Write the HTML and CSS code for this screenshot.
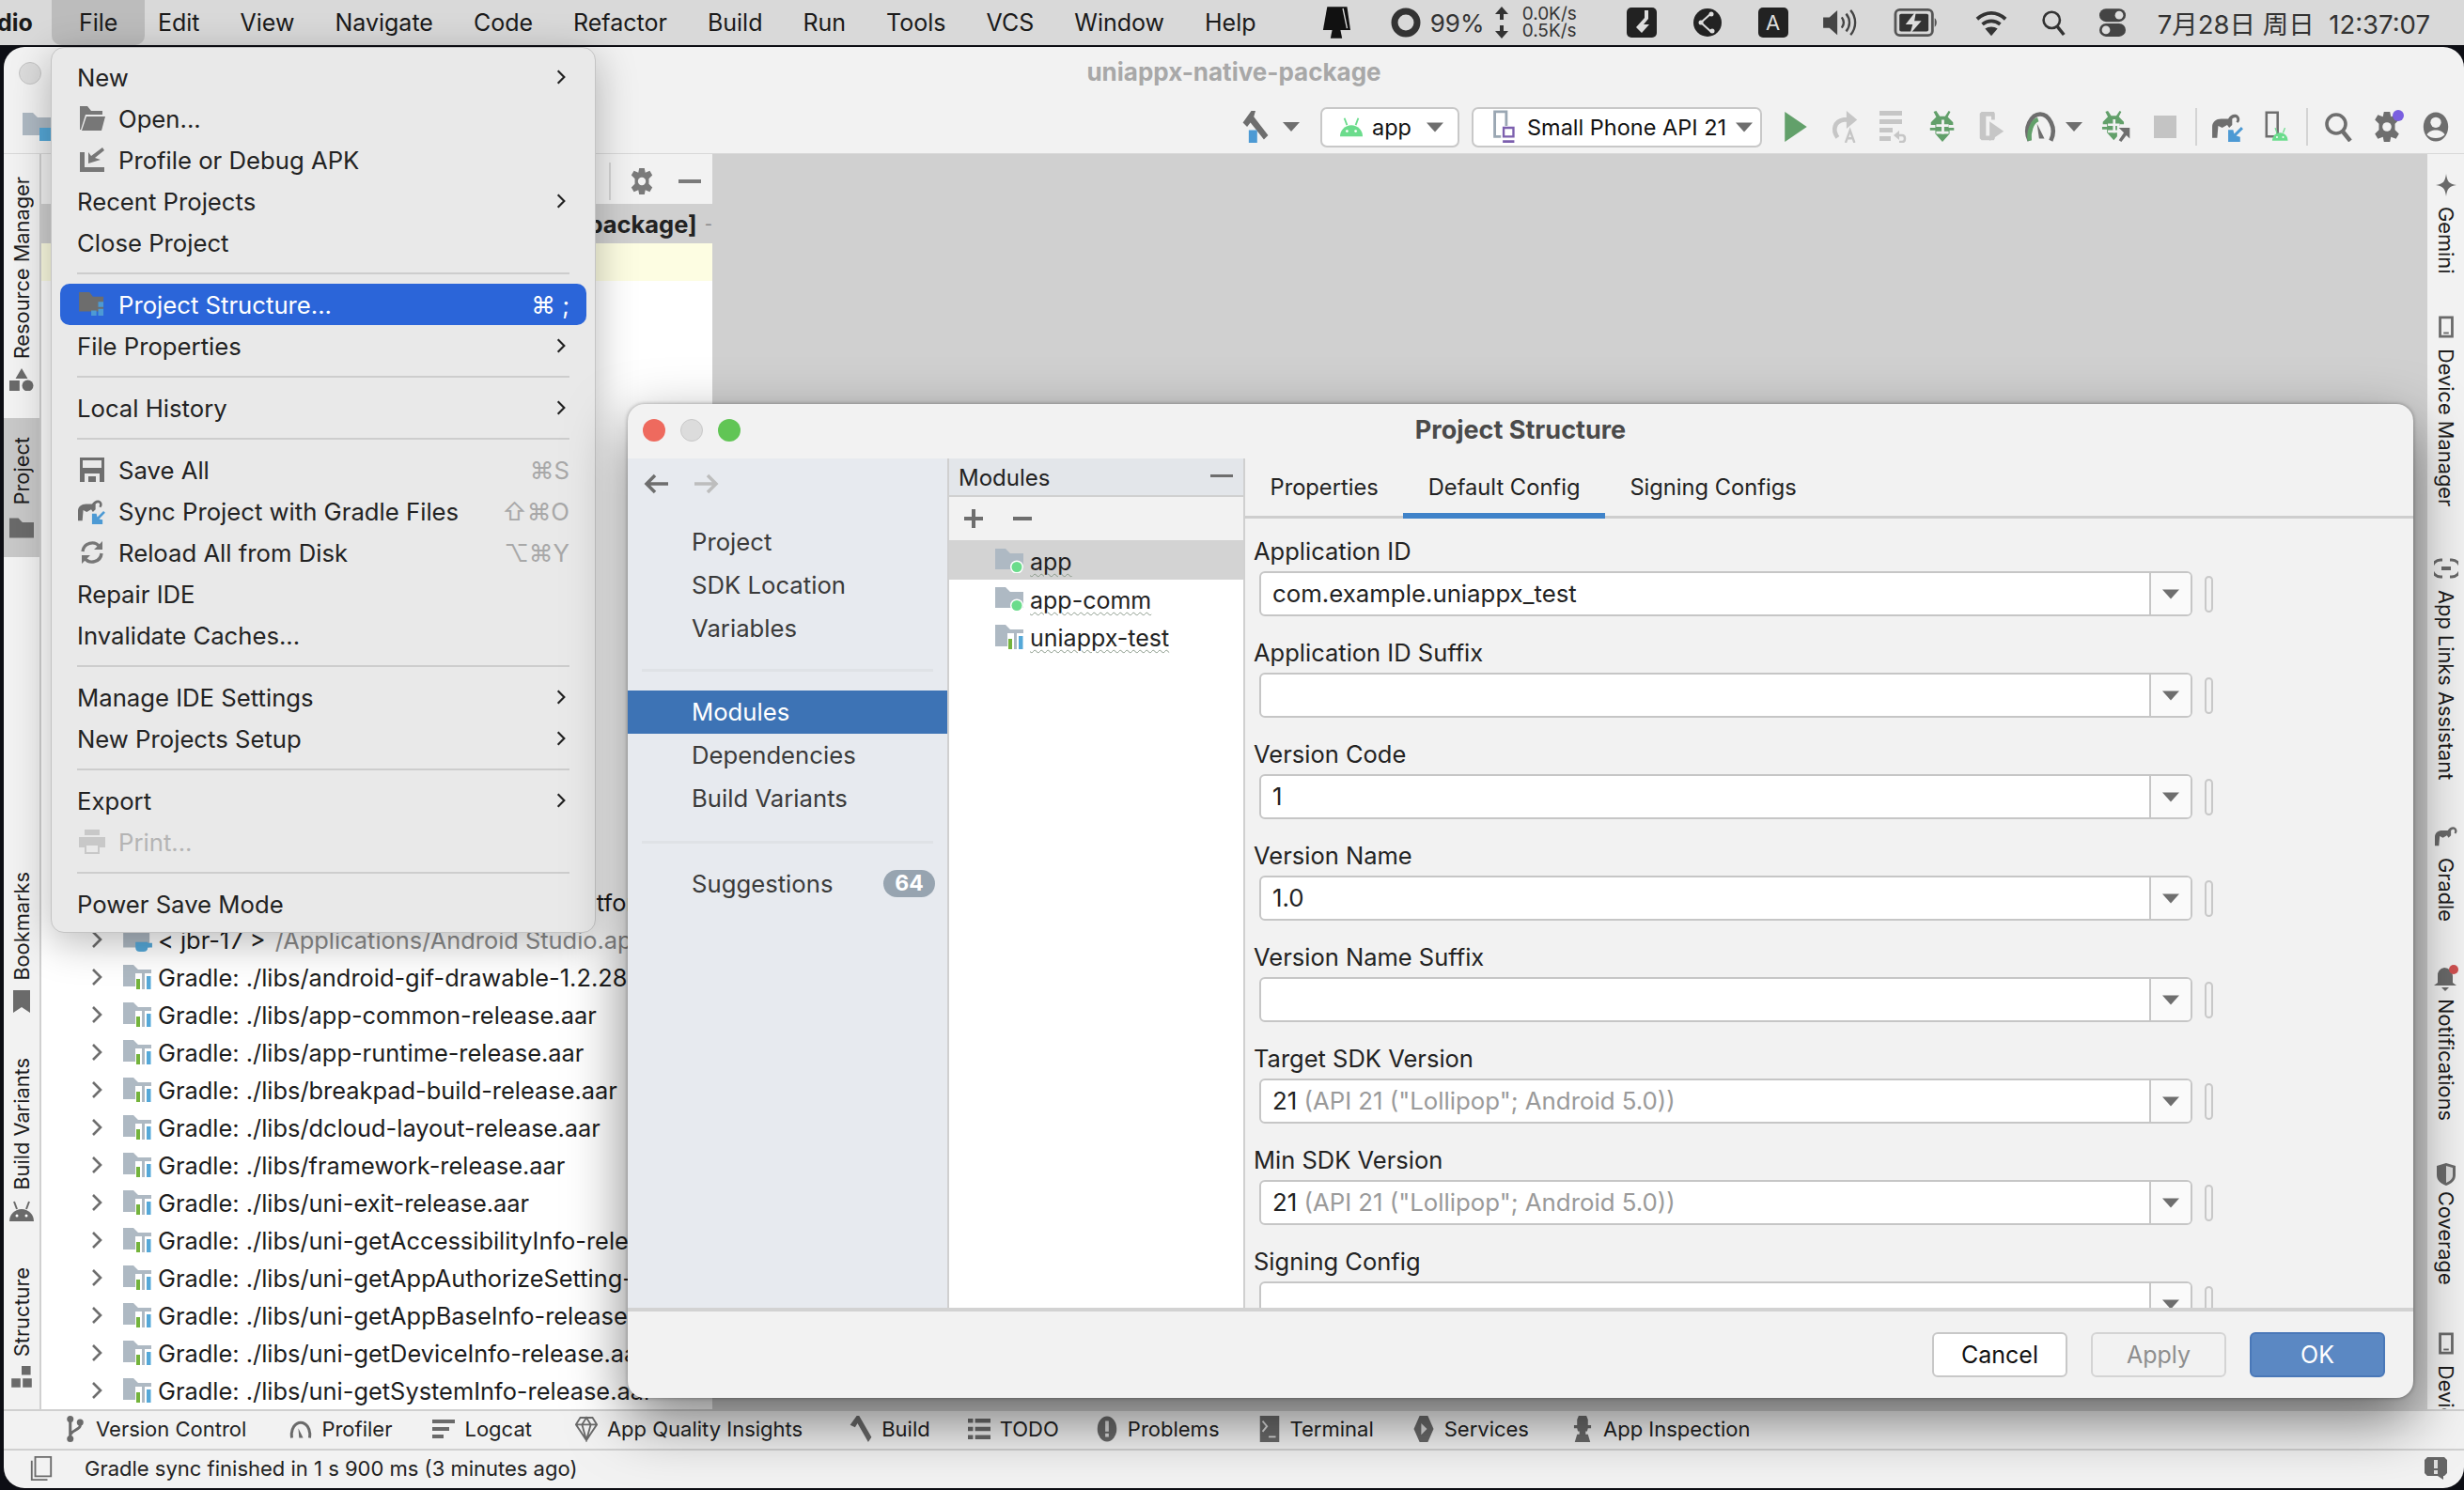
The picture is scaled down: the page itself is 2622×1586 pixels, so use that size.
FILE: index.html
```html
<!DOCTYPE html>
<html lang="en">
<head>
<meta charset="utf-8">
<title>Project Structure</title>
<link rel="stylesheet" href="styles.css">
</head>
<body>
<svg class="defs" xmlns="http://www.w3.org/2000/svg">
  <symbol id="folder" viewBox="0 0 30 24"><path d="M0 0h11l5 5h14v19H0z"/></symbol>
  <symbol id="mod" viewBox="0 0 30 26"><path fill="#aeb9c3" d="M0 0h11l5 5h14v17H0z"/><circle cx="23" cy="19.5" r="7" fill="#fff"/><circle cx="23" cy="19.5" r="5.5" fill="#6bdc8c"/></symbol>
  <symbol id="lib" viewBox="0 0 30 26"><path fill="#aeb9c3" d="M0 0h11l5 5h14v18H0z"/><path fill="#fff" d="M13 9h17v17H13z"/><path fill="#74b33c" d="M14 15h4v11h-4z"/><path fill="#aeb9c3" d="M20 9h3v17h-3z"/><path fill="#55a8d8" d="M25 12h4.500v14H25z"/></symbol>
  <symbol id="chev" viewBox="0 0 12 20"><path d="M2 2l8 8-8 8" fill="none" stroke="currentColor" stroke-width="2.600"/></symbol>
  <symbol id="tri" viewBox="0 0 18 10"><path d="M0 0h18L9 10z"/></symbol>
  <symbol id="open" viewBox="0 0 28 26"><path fill="#777" d="M1 0h8l4 5h12v4H7L2 25H1z"/><path fill="#777" d="M8 11h20l-4 15H3z"/></symbol>
  <symbol id="apk" viewBox="0 0 26 26"><path fill="#777" d="M0 5h5v16h21v5H0z"/><path fill="#777" d="M24 0l2 3-10 8 6 2-13 4V5l3 4z"/></symbol>
  <symbol id="ps" viewBox="0 0 30 28"><path fill="#6d6d6d" d="M0 0h12l4 5h12v17H0z"/><path fill="#4d9ad4" d="M22 11h6v6h-6zM14 21h6v6h-6zM22 19h6v8h-6z"/></symbol>
  <symbol id="save" viewBox="0 0 26 26"><path fill="#6e6e6e" d="M0 0h26v26H0z"/><path fill="#e9e9e9" d="M3 3h20v8H3zM5 17h16v9H5z"/><path fill="#6e6e6e" d="M9 20h8v6H9z"/></symbol>
  <symbol id="eleph" viewBox="0 0 30 28"><path d="M1 26V15c0-5 4-8 9-8h7c2-4 7-6 10-3 2 2 2 5 0 7l-2-1c1-2 1-3 0-4-1-1-3 0-4 1v6l-3 3-2-3-5 3-4-2-1 12H2z"/></symbol>
  <symbol id="sync" viewBox="0 0 32 30"><use href="#eleph" width="30" height="28" fill="#6e6e6e"/><path fill="#4d9ad4" d="M30 15l2 2-7 7 4 1v5H17V18h5l1 4z"/></symbol>
  <symbol id="reload" viewBox="0 0 26 26"><path fill="none" stroke="#777" stroke-width="3.400" d="M3 12a10 10 0 0 1 18-5M23 14a10 10 0 0 1-18 5"/><path fill="#777" d="M24 1v9h-9zM2 25v-9h9z"/></symbol>
  <symbol id="print" viewBox="0 0 28 26"><path fill="#c8c8c8" d="M6 0h16v6H6zM0 8h28v11h-6v-4H6v4H0z"/><path fill="none" stroke="#c8c8c8" stroke-width="2" d="M7 16h14v9H7z"/></symbol>
  <symbol id="hammer" viewBox="0 0 34 38"><path fill="#6e6e6e" d="M2 14L12 0h5l-2 7 17 22-5 5L11 14l-4 5z"/><path fill="#4d9ad4" d="M9 23h10v15H9z"/></symbol>
  <symbol id="droid" viewBox="0 0 26 22"><path d="M0 22a13 13 0 0 1 26 0z"/><path stroke="currentColor" stroke-width="2" d="M5 1l3 8M21 1l-3 8"/><circle cx="8" cy="16" r="1.500" fill="#fff"/><circle cx="18" cy="16" r="1.500" fill="#fff"/></symbol>
  <symbol id="phone" viewBox="0 0 28 38"><path fill="none" stroke="#9aa7b3" stroke-width="3" d="M3 2h13v28H3z"/><path fill="#fff" d="M10 18h18v20H10z"/><path fill="none" stroke="#7c5fae" stroke-width="2.500" d="M13 20h11v10H13z"/><path fill="#7c5fae" d="M12 34h13v3H12z"/></symbol>
  <symbol id="play" viewBox="0 0 22 30"><path d="M0 0l22 15L0 30z"/></symbol>
  <symbol id="rerun" viewBox="0 0 30 36"><path fill="none" stroke="#c6c6c6" stroke-width="5" d="M7 30C1 22 3 12 14 10h6"/><path fill="#c6c6c6" d="M17 0l12 10-12 10z"/><path fill="none" stroke="#c6c6c6" stroke-width="2.500" d="M16 36l5-14 5 14M18 31h6"/></symbol>
  <symbol id="apply" viewBox="0 0 30 34"><path fill="#c6c6c6" d="M0 0h24v5H0zM0 9h24v5H0zM0 18h14v5H0zM0 27h12v5H0z"/><path fill="none" stroke="#c6c6c6" stroke-width="2.500" d="M18 26h6c4 0 4 7 0 7h-3"/><path fill="#c6c6c6" d="M21 21v10l-6-5z"/></symbol>
  <symbol id="bug" viewBox="0 0 28 36"><path fill="#62a06a" d="M7 0l4 6h6l4-6 2 1-3 6 6 6v3h-5v3h6v3h-5v4l-8 9-8-9v-4H0v-3h6v-3H1v-3l6-6-3-6z"/><path fill="#f2f2f2" d="M7 15h14v3H7zM7 23h14v3H7z"/><path fill="#f2f2f2" d="M13 10h3v16h-3z"/></symbol>
  <symbol id="cov" viewBox="0 0 28 36"><path fill="#c6c6c6" d="M3 1h14l1 2v7h-4V6H8v22h6v-6h4v9l-1 2H3l-2-2V3z"/><path fill="#c6c6c6" d="M12 12l16 11-16 11z"/></symbol>
  <symbol id="prof" viewBox="0 0 30 30"><path fill="none" stroke="#6e6e6e" stroke-width="4" d="M5 28C-1 16 7 3 15 3s16 13 10 25"/><path fill="none" stroke="#62a06a" stroke-width="4" d="M5 28C4 20 7 10 13 8"/><path fill="#6e6e6e" d="M12 12l7 14h-5z"/></symbol>
  <symbol id="attach" viewBox="0 0 34 38"><use href="#bug" width="28" height="36"/><path fill="#f2f2f2" d="M18 18h16v20H18z"/><path fill="#6e6e6e" d="M20 20h13v13l-4-4-6 8-3-2 6-9z"/></symbol>
  <symbol id="device2" viewBox="0 0 30 40"><path fill="none" stroke="#6e6e6e" stroke-width="3" d="M3 2h14v30H3z"/><use href="#droid" x="10" y="20" width="20" height="18" fill="#6bdc8c" color="#6bdc8c"/></symbol>
  <symbol id="search" viewBox="0 0 30 32"><circle cx="13" cy="13" r="10" fill="none" stroke="currentColor" stroke-width="3.600"/><path stroke="currentColor" stroke-width="4.500" d="M20 21l8 10"/></symbol>
  <symbol id="gear" viewBox="0 0 26 30"><path d="M10 0h6l1 5 5-2 3 5-4 4v6l4 4-3 5-5-2-1 5h-6l-1-5-5 2-3-5 4-4v-6L1 8l3-5 5 2z"/><circle cx="13" cy="15" r="4.500" fill="#f2f2f2"/></symbol>
  <symbol id="acct" viewBox="0 0 30 34"><ellipse cx="15" cy="17" rx="14" ry="16.500" fill="#6e6e6e"/><circle cx="15" cy="12" r="6" fill="#f2f2f2"/><path fill="#f2f2f2" d="M5 26c3-7 17-7 20 0-5 5-15 5-20 0z"/></symbol>
  <symbol id="vcs" viewBox="0 0 20 32"><circle cx="4" cy="4" r="4"/><circle cx="4" cy="28" r="4"/><circle cx="16" cy="8" r="4"/><path fill="none" stroke="currentColor" stroke-width="3.500" d="M4 4v24M16 8v4c0 5-12 6-12 12"/></symbol>
  <symbol id="gauge" viewBox="0 0 28 22"><path fill="none" stroke="currentColor" stroke-width="3.500" d="M3 22C1 10 8 3 14 3s13 7 11 19"/><path d="M11 10l6 12h-5z"/></symbol>
  <symbol id="logcat" viewBox="0 0 24 20"><path d="M0 0h24v4H0zM0 8h18v4H0zM0 16h12v4H0z"/></symbol>
  <symbol id="gem" viewBox="0 0 26 30"><path fill="none" stroke="currentColor" stroke-width="2" d="M6 2h14l5 8-12 18L1 10zM1 10h24M8 10l5 18 5-18-5-8z"/></symbol>
  <symbol id="ham2" viewBox="0 0 26 32"><path d="M0 11L8 0h3l15 26-4 6L9 9l-3 5z"/></symbol>
  <symbol id="todo" viewBox="0 0 22 22"><path d="M0 1h5v4H0zM7 1h15v4H7zM0 9h5v4H0zM7 9h15v4H7zM0 17h5v4H0zM7 17h15v4H7z"/></symbol>
  <symbol id="prob" viewBox="0 0 22 30"><ellipse cx="11" cy="15" rx="11" ry="14.500"/><path fill="#ddd" d="M9 6h4v12H9zM9 20h4v4H9z"/></symbol>
  <symbol id="term" viewBox="0 0 22 30"><path d="M0 0h22v30H0z"/><path fill="none" stroke="#ddd" stroke-width="2" d="M3 6l5 6-5 6M10 24h8"/></symbol>
  <symbol id="serv" viewBox="0 0 24 32"><path d="M7 0h10l7 16-7 16H7L0 16z"/><path fill="#ddd" d="M9 9l7 7-7 7z"/></symbol>
  <symbol id="insp" viewBox="0 0 22 34"><path d="M6 0h10l2 5v7h4v4h-4l-1 4h-2v4h3l3 10H1L4 24h3v-4H5l-1-4H0v-4h4V5z"/></symbol>
  <symbol id="stat" viewBox="0 0 24 28"><path fill="none" stroke="currentColor" stroke-width="2" d="M1 5v22h18M5 1h18v22H5z"/></symbol>
  <symbol id="feed" viewBox="0 0 24 24"><path d="M3 0h18l3 3v14l-3 3h-1v4l-6-4H3l-3-3V3z"/><path fill="#ddd" d="M10 3h4v9h-4zM10 14h4v4h-4z"/></symbol>
  <symbol id="res" viewBox="0 0 24 22"><path d="M12 0l6 10H6zM0 12h10v10H0z"/><circle cx="18" cy="17" r="5.500"/></symbol>
  <symbol id="mark" viewBox="0 0 18 24"><path d="M0 0h18v24l-9-6-9 6z"/></symbol>
  <symbol id="struct" viewBox="0 0 18 20"><path d="M9 0h8v8H9zM0 11h8v8H0zM10 11h8v8h-8z"/></symbol>
  <symbol id="sparkle" viewBox="0 0 22 24"><path d="M11 0c1 8 3 11 11 12-8 1-10 4-11 12-1-8-3-11-11-12 8-1 10-4 11-12z"/></symbol>
  <symbol id="link" viewBox="0 0 26 24"><path fill="none" stroke="currentColor" stroke-width="3" d="M9 3H7a9 9 0 0 0 0 18h2M17 3h2a9 9 0 0 1 0 18h-2"/><path d="M8 10h10v4H8z"/></symbol>
  <symbol id="bell" viewBox="0 0 26 28"><path d="M11 3a9 9 0 0 1 9 9v7l4 3H0l4-3v-7a8 8 0 0 1 7-9z"/><path d="M8 24h8l-4 4z"/><circle cx="21" cy="5" r="5" fill="#cf5050"/></symbol>
  <symbol id="shield" viewBox="0 0 20 24"><path d="M10 0l10 3v10c0 6-5 9-10 11C5 22 0 19 0 13V3z"/><path fill="#ddd" d="M10 3l7 2v8c0 4-3 6-7 8z"/></symbol>
  <symbol id="dev" viewBox="0 0 18 26"><path fill="none" stroke="currentColor" stroke-width="3" d="M2 2h14v22H2z"/><path d="M6 19h6v2H6z"/></symbol>
</svg>

<header class="menubar">
  <span class="app-name">dio</span>
  <span class="m-item m-active">File</span>
  <span class="m-item">Edit</span>
  <span class="m-item">View</span>
  <span class="m-item">Navigate</span>
  <span class="m-item">Code</span>
  <span class="m-item">Refactor</span>
  <span class="m-item">Build</span>
  <span class="m-item">Run</span>
  <span class="m-item">Tools</span>
  <span class="m-item">VCS</span>
  <span class="m-item">Window</span>
  <span class="m-item">Help</span>
  <div class="tray">
    <svg class="t-notch" viewBox="0 0 34 38"><path d="M6 0h24l4 28H1z"/><path d="M12 28h10l2 10H10z"/><path stroke="#ddd" stroke-width="1.500" d="M25 2l5 24"/></svg>
    <svg class="t-ring" viewBox="0 0 32 32"><circle cx="16" cy="16" r="12" fill="none" stroke="#333" stroke-width="7"/></svg>
    <span class="t-pct">99%</span>
    <svg class="t-arrows" viewBox="0 0 16 34"><path d="M8 0l7 8h-5v6H6V8H1zM8 34l7-8h-5v-6H6v6H1z"/></svg>
    <span class="t-net"><span>0.0K/s</span><span>0.5K/s</span></span>
    <svg class="t-box t-box-a" viewBox="0 0 32 32"><rect width="32" height="32" rx="5"/><path fill="#ddd" d="M19 3v8l-9 10 6 6 8-9h-6l5-6V3z"/></svg>
    <svg class="t-box t-box-b" viewBox="0 0 32 32"><circle cx="16" cy="16" r="15"/><path fill="none" stroke="#ddd" stroke-width="2" d="M9 16l10-9M9 16l11 10"/><circle cx="9" cy="16" r="2.500" fill="#ddd"/><circle cx="20" cy="7" r="2.500" fill="#ddd"/><circle cx="21" cy="25" r="2.500" fill="#ddd"/></svg>
    <span class="t-a">A</span>
    <svg class="t-speaker" viewBox="0 0 36 32"><path fill="#444" d="M0 10h7l9-8v28l-9-8H0z"/><path fill="none" stroke="#444" stroke-width="2.500" d="M21 10c3 4 3 8 0 12M26 6c5 6 5 14 0 20M31 2c7 8 7 20 0 28"/></svg>
    <svg class="t-batt" viewBox="0 0 50 32"><rect x="1.500" y="1.500" width="42" height="29" rx="5" fill="none" stroke="#555" stroke-width="3"/><rect x="6" y="6" width="33" height="20" rx="2" fill="#333"/><path fill="#555" d="M46 11c3 2 3 8 0 10z"/><path fill="#ddd" d="M25 3L13 18h8l-3 11 13-15h-8z"/></svg>
    <svg class="t-wifi" viewBox="0 0 36 30"><path fill="none" stroke="#333" stroke-width="4" d="M2 11c10-9 22-9 32 0M8 17c6-5 14-5 20 0"/><path fill="#333" d="M18 30l-7-8c4-3 10-3 14 0z"/></svg>
    <svg class="t-search" viewBox="0 0 30 32"><circle cx="13" cy="13" r="10" fill="none" stroke="#333" stroke-width="3"/><path stroke="#333" stroke-width="4" d="M20 21l8 10"/></svg>
    <svg class="t-ctl" viewBox="0 0 32 34"><rect width="32" height="16" rx="8" fill="#444"/><rect y="18" width="32" height="16" rx="8" fill="#444"/><circle cx="24" cy="8" r="5" fill="#ddd"/><circle cx="8" cy="26" r="5" fill="#ddd"/></svg>
    <span class="t-date">7月28日 周日&nbsp;&nbsp;12:37:07</span>
  </div>
</header>

<main class="ide">
  <div class="win-title">
    <span class="light-off"></span>
    <span class="win-name">uniappx-native-package</span>
  </div>
  <div class="toolbar">
    <svg class="crumb" viewBox="0 0 30 30"><path fill="#aeb9c3" d="M0 0h11l5 5h14v19H0z"/><path fill="#55a8d8" d="M18 16h12v14H18z"/></svg>
    <div class="tb-right">
      <span class="tb tb-hammer"><svg class="i34"><use href="#hammer"/></svg></span>
      <svg class="tri-sm"><use href="#tri"/></svg>
      <div class="combo combo-app"><svg class="i-droid"><use href="#droid"/></svg><span>app</span><svg class="tri-md"><use href="#tri"/></svg></div>
      <div class="combo combo-dev"><svg class="i-phone"><use href="#phone"/></svg><span>Small Phone API 21</span><svg class="tri-md"><use href="#tri"/></svg></div>
      <span class="tb"><svg class="i-play"><use href="#play"/></svg></span>
      <span class="tb"><svg class="i34"><use href="#rerun"/></svg></span>
      <span class="tb"><svg class="i34"><use href="#apply"/></svg></span>
      <span class="tb"><svg class="i34"><use href="#bug"/></svg></span>
      <span class="tb"><svg class="i34"><use href="#cov"/></svg></span>
      <span class="tb"><svg class="i34"><use href="#prof"/></svg></span>
      <svg class="tri-sm"><use href="#tri"/></svg>
      <span class="tb tb-first"><svg class="i34"><use href="#attach"/></svg></span>
      <span class="tb"><span class="stop"></span></span>
      <span class="tb-sep"></span>
      <span class="tb"><svg class="i34"><use href="#sync"/></svg></span>
      <span class="tb"><svg class="i34"><use href="#device2"/></svg></span>
      <span class="tb-sep"></span>
      <span class="tb tb-gray"><svg class="i30"><use href="#search"/></svg></span>
      <span class="tb tb-gray tb-dot"><svg class="i30"><use href="#gear"/></svg><span class="dot"></span></span>
      <span class="tb"><svg class="i30"><use href="#acct"/></svg></span>
    </div>
  </div>

  <div class="work">
    <aside class="stripe stripe-l">
      <div class="s-item s-first"><svg class="s-ic"><use href="#res"/></svg><span class="vt">Resource Manager</span></div>
      <div class="s-item s-on"><svg class="s-ic s-fold"><use href="#folder"/></svg><span class="vt">Project</span></div>
      <div class="s-item s-push"><svg class="s-ic"><use href="#mark"/></svg><span class="vt">Bookmarks</span></div>
      <div class="s-item"><svg class="s-ic"><use href="#droid"/></svg><span class="vt">Build Variants</span></div>
      <div class="s-item"><svg class="s-ic"><use href="#struct"/></svg><span class="vt">Structure</span></div>
    </aside>
    <section class="panel">
      <div class="p-head"><span class="p-sep"></span><svg class="i-pg"><use href="#gear"/></svg><span class="p-min"></span></div>
      <div class="p-sel"><span>uniappx-native-package [uniappx-native-package]</span><span class="p-dash">-</span></div>
      <div class="p-yellow"></div>
      <div class="tree">
        <div class="t-row t-plat"><svg class="t-ch"><use href="#chev"/></svg><span>Android API 34 Platform</span></div>
        <div class="t-row"><svg class="t-ch"><use href="#chev"/></svg><svg class="t-jbr" viewBox="0 0 34 30"><path fill="#aeb9c3" d="M0 0h11l5 4h14v20H0z"/><path fill="#55a8d8" d="M14 18h14v6c0 3-2 5-5 5h-4c-3 0-5-2-5-5zM28 19h5v5h-5z"/></svg><span>&lt; jbr-17 &gt; <em class="t-path">/Applications/Android Studio.app/Contents/jbr</em></span></div>
        <div class="t-row"><svg class="t-ch"><use href="#chev"/></svg><svg class="t-ic"><use href="#lib"/></svg><span>Gradle: ./libs/android-gif-drawable-1.2.28.aar</span></div>
        <div class="t-row"><svg class="t-ch"><use href="#chev"/></svg><svg class="t-ic"><use href="#lib"/></svg><span>Gradle: ./libs/app-common-release.aar</span></div>
        <div class="t-row"><svg class="t-ch"><use href="#chev"/></svg><svg class="t-ic"><use href="#lib"/></svg><span>Gradle: ./libs/app-runtime-release.aar</span></div>
        <div class="t-row"><svg class="t-ch"><use href="#chev"/></svg><svg class="t-ic"><use href="#lib"/></svg><span>Gradle: ./libs/breakpad-build-release.aar</span></div>
        <div class="t-row"><svg class="t-ch"><use href="#chev"/></svg><svg class="t-ic"><use href="#lib"/></svg><span>Gradle: ./libs/dcloud-layout-release.aar</span></div>
        <div class="t-row"><svg class="t-ch"><use href="#chev"/></svg><svg class="t-ic"><use href="#lib"/></svg><span>Gradle: ./libs/framework-release.aar</span></div>
        <div class="t-row"><svg class="t-ch"><use href="#chev"/></svg><svg class="t-ic"><use href="#lib"/></svg><span>Gradle: ./libs/uni-exit-release.aar</span></div>
        <div class="t-row"><svg class="t-ch"><use href="#chev"/></svg><svg class="t-ic"><use href="#lib"/></svg><span>Gradle: ./libs/uni-getAccessibilityInfo-release.aar</span></div>
        <div class="t-row"><svg class="t-ch"><use href="#chev"/></svg><svg class="t-ic"><use href="#lib"/></svg><span>Gradle: ./libs/uni-getAppAuthorizeSetting-release.aar</span></div>
        <div class="t-row"><svg class="t-ch"><use href="#chev"/></svg><svg class="t-ic"><use href="#lib"/></svg><span>Gradle: ./libs/uni-getAppBaseInfo-release.aar</span></div>
        <div class="t-row"><svg class="t-ch"><use href="#chev"/></svg><svg class="t-ic"><use href="#lib"/></svg><span>Gradle: ./libs/uni-getDeviceInfo-release.aar</span></div>
        <div class="t-row"><svg class="t-ch"><use href="#chev"/></svg><svg class="t-ic"><use href="#lib"/></svg><span>Gradle: ./libs/uni-getSystemInfo-release.aar</span></div>
      </div>
    </section>
    <div class="editor"></div>
    <aside class="stripe stripe-r">
      <div class="s-item r-gem"><svg class="s-ic"><use href="#sparkle"/></svg><span class="vt">Gemini</span></div>
      <div class="s-item r-dm"><svg class="s-ic"><use href="#dev"/></svg><span class="vt">Device Manager</span></div>
      <div class="s-item"><svg class="s-ic"><use href="#link"/></svg><span class="vt">App Links Assistant</span></div>
      <div class="s-item r-gr"><svg class="s-ic s-el"><use href="#eleph"/></svg><span class="vt">Gradle</span></div>
      <div class="s-item r-no"><svg class="s-ic s-bell"><use href="#bell"/></svg><span class="vt">Notifications</span></div>
      <div class="s-item r-co"><svg class="s-ic"><use href="#shield"/></svg><span class="vt">Coverage</span></div>
      <div class="s-item"><svg class="s-ic"><use href="#dev"/></svg><span class="vt">Device Explorer</span></div>
    </aside>
  </div>

  <div class="toolstrip">
    <span class="ts"><svg class="ts-ic"><use href="#vcs"/></svg>Version Control</span>
    <span class="ts ts-a"><svg class="ts-ic"><use href="#gauge"/></svg>Profiler</span>
    <span class="ts"><svg class="ts-ic"><use href="#logcat"/></svg>Logcat</span>
    <span class="ts ts-a"><svg class="ts-ic"><use href="#gem"/></svg>App Quality Insights</span>
    <span class="ts ts-build"><svg class="ts-ic"><use href="#ham2"/></svg>Build</span>
    <span class="ts ts-todo"><svg class="ts-ic"><use href="#todo"/></svg>TODO</span>
    <span class="ts ts-prob"><svg class="ts-ic"><use href="#prob"/></svg>Problems</span>
    <span class="ts ts-term"><svg class="ts-ic"><use href="#term"/></svg>Terminal</span>
    <span class="ts ts-term"><svg class="ts-ic"><use href="#serv"/></svg>Services</span>
    <span class="ts ts-insp"><svg class="ts-ic"><use href="#insp"/></svg>App Inspection</span>
  </div>
  <footer class="status">
    <svg class="st-ic"><use href="#stat"/></svg>
    <span class="st-text">Gradle sync finished in 1 s 900 ms (3 minutes ago)</span>
    <svg class="st-fb"><use href="#feed"/></svg>
  </footer>
</main>

<nav class="menu">
  <div class="mi"><span class="mi-t">New</span><svg class="mi-ch"><use href="#chev"/></svg></div>
  <div class="mi mi-i"><svg class="mi-ic"><use href="#open"/></svg><span class="mi-t">Open...</span></div>
  <div class="mi mi-i"><svg class="mi-ic"><use href="#apk"/></svg><span class="mi-t">Profile or Debug APK</span></div>
  <div class="mi"><span class="mi-t">Recent Projects</span><svg class="mi-ch"><use href="#chev"/></svg></div>
  <div class="mi"><span class="mi-t">Close Project</span></div>
  <hr class="ms">
  <div class="mi mi-i mi-sel"><svg class="mi-ic"><use href="#ps"/></svg><span class="mi-t">Project Structure...</span><span class="mi-k">⌘ ;</span></div>
  <div class="mi"><span class="mi-t">File Properties</span><svg class="mi-ch"><use href="#chev"/></svg></div>
  <hr class="ms">
  <div class="mi"><span class="mi-t">Local History</span><svg class="mi-ch"><use href="#chev"/></svg></div>
  <hr class="ms">
  <div class="mi mi-i"><svg class="mi-ic"><use href="#save"/></svg><span class="mi-t">Save All</span><span class="mi-k">⌘S</span></div>
  <div class="mi mi-i"><svg class="mi-ic mi-sync"><use href="#sync"/></svg><span class="mi-t">Sync Project with Gradle Files</span><span class="mi-k">⇧⌘O</span></div>
  <div class="mi mi-i"><svg class="mi-ic"><use href="#reload"/></svg><span class="mi-t">Reload All from Disk</span><span class="mi-k">⌥⌘Y</span></div>
  <div class="mi"><span class="mi-t">Repair IDE</span></div>
  <div class="mi"><span class="mi-t">Invalidate Caches...</span></div>
  <hr class="ms">
  <div class="mi"><span class="mi-t">Manage IDE Settings</span><svg class="mi-ch"><use href="#chev"/></svg></div>
  <div class="mi"><span class="mi-t">New Projects Setup</span><svg class="mi-ch"><use href="#chev"/></svg></div>
  <hr class="ms">
  <div class="mi"><span class="mi-t">Export</span><svg class="mi-ch"><use href="#chev"/></svg></div>
  <div class="mi mi-i mi-dis"><svg class="mi-ic"><use href="#print"/></svg><span class="mi-t">Print...</span></div>
  <hr class="ms">
  <div class="mi"><span class="mi-t">Power Save Mode</span></div>
</nav>

<section class="dialog">
  <header class="d-title">
    <span class="lights"><i class="l-red"></i><i class="l-gray"></i><i class="l-green"></i></span>
    <span class="d-name">Project Structure</span>
  </header>
  <div class="d-main">
    <aside class="d-nav">
      <div class="d-arrows">
        <svg class="d-arr" viewBox="0 0 26 22"><path fill="none" stroke="#6e6e6e" stroke-width="3.500" d="M26 11H3M12 2l-9 9 9 9"/></svg>
        <svg class="d-arr d-arr-off" viewBox="0 0 26 22"><path fill="none" stroke="#bdbdbd" stroke-width="3.500" d="M0 11h23M14 2l9 9-9 9"/></svg>
      </div>
      <div class="d-n d-n-top">Project</div>
      <div class="d-n">SDK Location</div>
      <div class="d-n">Variables</div>
      <hr class="d-div">
      <div class="d-n d-n-on">Modules</div>
      <div class="d-n">Dependencies</div>
      <div class="d-n">Build Variants</div>
      <hr class="d-div d-div2">
      <div class="d-n d-sug"><span>Suggestions</span><b class="badge">64</b></div>
    </aside>
    <section class="d-mods">
      <div class="mods-h"><span>Modules</span><span class="mods-min"></span></div>
      <div class="mods-t">
        <svg class="pm" viewBox="0 0 20 20"><path fill="#6e6e6e" d="M8 0h4v8h8v4h-8v8H8v-8H0V8h8z"/></svg>
        <svg class="pm" viewBox="0 0 20 20"><path fill="#6e6e6e" d="M0 8h20v4H0z"/></svg>
      </div>
      <div class="mods-list">
        <div class="mod mod-on"><svg class="mod-ic"><use href="#mod"/></svg><span class="wavy">app</span></div>
        <div class="mod"><svg class="mod-ic"><use href="#mod"/></svg><span class="wavy">app-comm</span></div>
        <div class="mod"><svg class="mod-ic"><use href="#lib"/></svg><span class="wavy">uniappx-test</span></div>
      </div>
    </section>
    <section class="d-form">
      <div class="tabs"><span class="tab">Properties</span><span class="tab tab-on">Default Config</span><span class="tab">Signing Configs</span></div>
      <div class="form">
        <div class="grp"><label>Application ID</label><div class="fld"><div class="inp"><span class="val">com.example.uniappx_test</span><span class="drop"><svg class="tri-f"><use href="#tri"/></svg></span></div><span class="pill"></span></div></div>
        <div class="grp"><label>Application ID Suffix</label><div class="fld"><div class="inp"><span class="val"></span><span class="drop"><svg class="tri-f"><use href="#tri"/></svg></span></div><span class="pill"></span></div></div>
        <div class="grp"><label>Version Code</label><div class="fld"><div class="inp"><span class="val">1</span><span class="drop"><svg class="tri-f"><use href="#tri"/></svg></span></div><span class="pill"></span></div></div>
        <div class="grp"><label>Version Name</label><div class="fld"><div class="inp"><span class="val">1.0</span><span class="drop"><svg class="tri-f"><use href="#tri"/></svg></span></div><span class="pill"></span></div></div>
        <div class="grp"><label>Version Name Suffix</label><div class="fld"><div class="inp"><span class="val"></span><span class="drop"><svg class="tri-f"><use href="#tri"/></svg></span></div><span class="pill"></span></div></div>
        <div class="grp"><label>Target SDK Version</label><div class="fld"><div class="inp"><span class="val">21 <em>(API 21 ("Lollipop"; Android 5.0))</em></span><span class="drop"><svg class="tri-f"><use href="#tri"/></svg></span></div><span class="pill"></span></div></div>
        <div class="grp"><label>Min SDK Version</label><div class="fld"><div class="inp"><span class="val">21 <em>(API 21 ("Lollipop"; Android 5.0))</em></span><span class="drop"><svg class="tri-f"><use href="#tri"/></svg></span></div><span class="pill"></span></div></div>
        <div class="grp"><label>Signing Config</label><div class="fld"><div class="inp"><span class="val"></span><span class="drop"><svg class="tri-f"><use href="#tri"/></svg></span></div><span class="pill"></span></div></div>
      </div>
    </section>
  </div>
  <footer class="d-foot">
    <button class="btn">Cancel</button>
    <button class="btn btn-off">Apply</button>
    <button class="btn btn-ok">OK</button>
  </footer>
</section>
</body>
</html>
```

FILE: styles.css
```css
:root { --ui: "Inter", "Noto Sans CJK SC", sans-serif; }
* { box-sizing: border-box; }
html, body { margin: 0; padding: 0; }
body { position: relative; width: 2622px; height: 1586px; overflow: hidden; background: #0d0e14; font-family: var(--ui); font-size: 24px; color: #1c1c1c; display: flex; flex-direction: column; }
.defs { width: 0; height: 0; position: absolute; }
svg { display: block; flex: none; overflow: visible; }
em { font-style: normal; }

/* macOS menu bar */
.menubar { height: 48px; flex: none; background: #d9d9d9; display: flex; align-items: center; font-size: 25px; color: #1a1a1a; }
.app-name { width: 58px; font-weight: 700; margin-left: -3px; }
.m-item { padding: 0 21.500px; line-height: 48px; }
.m-active { background: #bcbcbc; border-radius: 0 0 10px 10px; padding: 0 29px; margin-right: -8px; }
.tray { margin-left: auto; display: flex; align-items: center; height: 48px; color: #333; }
.t-notch { width: 30px; height: 34px; margin-right: 43px; fill: #111; }
.t-ring { width: 32px; height: 32px; margin-right: 10px; }
.t-pct { font-size: 26px; width: 60px; margin-right: 10px; }
.t-arrows { width: 16px; height: 34px; fill: #333; margin: 0 14px 0 -2px; }
.t-net { display: flex; flex-direction: column; font-size: 19px; line-height: 18px; width: 80px; }
.t-box { width: 32px; height: 32px; fill: #222; }
.t-box-a { margin-right: 38px; margin-left: 31px; }
.t-box-b { margin-right: 38px; }
.t-a { width: 32px; height: 32px; border-radius: 5px; background: #222; color: #ddd; font-size: 22px; text-align: center; line-height: 32px; margin-right: 37px; }
.t-speaker { width: 34px; height: 30px; margin-right: 40px; }
.t-batt { width: 50px; height: 30px; margin-right: 38px; }
.t-wifi { width: 34px; height: 30px; margin-right: 36px; }
.t-search { width: 26px; height: 30px; margin-right: 36px; }
.t-ctl { width: 28px; height: 32px; margin-right: 34px; }
.t-date { font-size: 27.500px; margin-right: 36px; white-space: nowrap; }

/* IDE window */
.ide { position: relative; flex: none; margin: 2px 0 0 4px; height: 1534px; border-radius: 22px; overflow: hidden; background: #f2f2f2; display: flex; flex-direction: column; }
.win-title { height: 50px; flex: none; display: flex; align-items: center; justify-content: center; position: relative; }
.light-off { position: absolute; left: 16px; top: 16px; width: 24px; height: 24px; border-radius: 50%; background: #dcdcdc; border: 1px solid #c4c4c4; }
.win-name { font-weight: 700; font-size: 26px; color: #a8a8a8; margin-top: 2px; }
.toolbar { height: 64px; flex: none; display: flex; align-items: center; padding: 7px 0 0 20px; border-bottom: 1px solid #d8d8d8; }
.crumb { width: 30px; height: 30px; }
.tb-right { margin-left: auto; display: flex; align-items: center; padding-right: 4px; }
.tb { width: 52px; height: 44px; display: flex; align-items: center; justify-content: center; position: relative; }
.tb-hammer { width: 56px; }
.tb-first { margin-left: 9px; }
.tb-gray { color: #6e6e6e; fill: #6e6e6e; }
.i34 { width: 34px; height: 34px; fill: #6e6e6e; }
.i30 { width: 30px; height: 32px; fill: #6e6e6e; }
.i-play { width: 24px; height: 32px; fill: #62a06a; }
.stop { width: 24px; height: 24px; background: #c4c4c4; }
.tb-sep { width: 2px; height: 40px; background: #d4d4d4; margin: 0 6px; }
.tb-dot .dot { position: absolute; top: 4px; right: 8px; width: 12px; height: 12px; border-radius: 50%; background: #7a5fe0; }
.tri-sm { width: 18px; height: 10px; fill: #6e6e6e; margin: 0 1px; }
.tri-md { width: 18px; height: 11px; fill: #6e6e6e; }
.combo { height: 43px; background: #fff; border: 2.500px solid #c8c8c8; border-radius: 7px; display: flex; align-items: center; font-size: 23.500px; padding: 0 15px 0 19px; gap: 10px; color: #111; white-space: nowrap; }
.combo-app { width: 148px; margin-left: 21px; }
.combo-dev { width: 309px; margin-left: 13px; margin-right: 10px; }
.combo svg:last-child { margin-left: auto; }
.i-droid { width: 24px; height: 22px; fill: #6bdc8c; color: #6bdc8c; }
.i-phone { width: 28px; height: 36px; }

.work { flex: 1; min-height: 0; display: flex; }
.stripe { flex: none; background: #f2f2f2; display: flex; flex-direction: column; align-items: center; font-size: 21.800px; color: #1c1c1c; overflow: hidden; }
.stripe-l { width: 40px; border-right: 2px solid #d0d0d0; }
.stripe-r { width: 41px; border-left: 2px solid #d0d0d0; padding-top: 21px; }
.s-item { width: 100%; display: flex; flex-direction: column; align-items: center; flex: none; }
.vt { writing-mode: vertical-rl; white-space: nowrap; }
.stripe-l .s-item { flex-direction: column-reverse; gap: 10px; }
.stripe-l .vt { transform: rotate(180deg); }
.s-first { margin-top: 24px; }
.s-on { background: #c8c8c8; margin-top: 29px; padding: 20px 0 19px; }
.stripe-l .s-on { gap: 12px; }
.s-push { margin-top: auto; }
.stripe-l .s-item + .s-item:not(.s-on):not(.s-push) { margin-top: 48px; }
.stripe-l .s-item:last-child { margin-bottom: 22px; }
.s-ic { width: 26px; height: 24px; fill: #6a6a6a; color: #6a6a6a; }
.stripe-r .s-item { gap: 11px; margin-bottom: 48px; }
.stripe-r .r-gem { margin-bottom: 44px; }
.stripe-r .r-dm { margin-bottom: 54px; }
.stripe-r .r-gr { margin-bottom: 46px; }
.stripe-r .r-no { gap: 8px; margin-bottom: 45px; }
.stripe-r .r-co { gap: 6px; margin-bottom: 50px; }
.s-bell { height: 28px; }

.panel { width: 715px; flex: none; background: #fff; border-right: 1px solid #d0d0d0; display: flex; flex-direction: column; overflow: hidden; }
.p-head { height: 53px; flex: none; background: #f2f2f2; display: flex; align-items: center; justify-content: flex-end; padding: 4px 12px 0 0; }
.p-sep { width: 2px; height: 40px; background: #d4d4d4; margin-right: 20px; }
.i-pg { width: 26px; height: 28px; fill: #7a7a7a; margin-right: 26px; }
.p-min { width: 24px; height: 4px; background: #7a7a7a; }
.p-sel { height: 42px; flex: none; background: #d0d0d0; display: flex; align-items: center; justify-content: flex-end; font-size: 25.500px; font-weight: 700; color: #222; gap: 8px; white-space: nowrap; }
.p-dash { color: #888; font-weight: 400; font-size: 18px; }
.p-yellow { height: 40px; flex: none; background: #fdfde2; }
.tree { flex: 1; display: flex; flex-direction: column; justify-content: flex-end; }
.t-row { height: 40px; flex: none; display: flex; align-items: center; padding-left: 53px; font-size: 25.400px; white-space: nowrap; color: #1c1c1c; }
.t-path { color: #8a8a8a; margin-left: 3px; }
.t-ch { width: 12px; height: 20px; color: #6e6e6e; margin-right: 22px; }
.t-ic { width: 30px; height: 26px; margin-right: 7px; }
.t-jbr { width: 32px; height: 28px; margin-right: 5px; }
.t-plat { padding-left: 332px; }
.editor { flex: 1; background: #d0d0d0; }

.toolstrip { height: 42px; flex: none; border-top: 2px solid #d0d0d0; display: flex; align-items: center; padding: 0 0 2px 64px; gap: 43px; font-size: 22px; color: #222; }
.ts { display: flex; align-items: center; gap: 10px; white-space: nowrap; }
.ts-a { margin-left: 3px; }
.ts-build { margin-left: 7px; }
.ts-todo { margin-left: -3px; }
.ts-prob { margin-left: -4px; }
.ts-term { margin-left: -2px; }
.ts-insp { margin-left: 2px; }
.ts-ic { width: 24px; height: 28px; fill: #6a6a6a; color: #6a6a6a; }
.status { height: 42px; flex: none; border-top: 2px solid #d0d0d0; display: flex; align-items: center; padding: 0 18px 2px 28px; font-size: 22px; color: #222; }
.st-ic { width: 24px; height: 26px; color: #6a6a6a; margin-right: 34px; }
.st-text { flex: 1; }
.st-fb { width: 24px; height: 24px; fill: #666; }

/* File menu */
.menu { position: absolute; left: 54px; top: 50px; width: 580px; height: 943px; background: #e9e9e9; border: 1px solid #c4c4c4; border-radius: 14px; padding: 9px 9px 8px; box-shadow: 0 10px 44px rgba(0,0,0,.28); font-size: 25.700px; color: #222; }
.mi { height: 44px; display: flex; align-items: center; padding: 0 22px 0 18px; border-radius: 10px; }
.mi-i { padding-left: 20px; }
.mi-ic { width: 28px; height: 26px; margin-right: 14px; }
.mi-sync { width: 30px; height: 28px; margin: 0 14px 0 -2px; }
.mi-t { flex: 1; white-space: nowrap; }
.mi-ch { width: 10px; height: 18px; color: #222; }
.mi-k { color: #a8a8a8; white-space: nowrap; margin-right: -4px; }
.mi-sel { background: #2b65d9; color: #fff; }
.mi-sel .mi-k { color: #fff; }
.mi-dis { color: #b4b4b4; }
.ms { height: 2px; margin: 10px 18px; border: 0; background: #cdcdcd; }

/* Dialog */
.dialog { position: absolute; left: 668px; top: 430px; width: 1900px; height: 1058px; background: #f2f2f2; border-radius: 18px; box-shadow: 0 24px 62px rgba(0,0,0,.5), 0 0 4px rgba(0,0,0,.35); display: flex; flex-direction: column; overflow: hidden; }
.d-title { height: 58px; flex: none; display: flex; align-items: center; justify-content: center; position: relative; padding-bottom: 3px; }
.lights { position: absolute; left: 16px; top: 16px; display: flex; gap: 16px; }
.lights i { width: 24px; height: 24px; border-radius: 50%; display: block; }
.l-red { background: #ee6a5e; }
.l-gray { background: #dcdcdc; border: 1px solid #c8c8c8; }
.l-green { background: #61c555; }
.d-name { font-weight: 700; font-size: 27px; color: #4a4a4a; }
.d-main { flex: 1; min-height: 0; display: flex; }
.d-nav { width: 342px; flex: none; background: #e7eaef; border-right: 2px solid #d0d0d0; font-size: 25.700px; color: #3a3a3a; }
.d-arrows { display: flex; gap: 28px; padding: 16px 0 0 17px; height: 66px; }
.d-arr { width: 26px; height: 22px; }
.d-n { height: 46px; display: flex; align-items: center; padding: 0 0 2px 68px; }
.d-div { height: 3px; border: 0; margin: 20px 15px 20px; background: #dfe2e6; }
.d-div2 { margin: 22px 15px 20px; }
.d-n-on { background: #3d73b5; color: #fff; }
.d-sug { justify-content: space-between; padding-right: 13px; }
.badge { width: 55px; height: 29px; border-radius: 15px; background: #97a4b0; color: #fff; font-size: 23px; text-align: center; line-height: 29px; }
.d-mods { width: 315px; flex: none; background: #fff; border-right: 2px solid #d0d0d0; display: flex; flex-direction: column; }
.mods-h { height: 41px; flex: none; background: #e3e6ea; border-bottom: 2px solid #d0d0d0; display: flex; align-items: center; justify-content: space-between; padding: 2px 11px 0 10px; font-size: 24px; color: #222; }
.mods-min { width: 24px; height: 3px; background: #6e6e6e; margin-bottom: 4px; }
.mods-t { height: 46px; flex: none; background: #f2f2f2; display: flex; align-items: center; gap: 32px; padding-left: 16px; }
.pm { width: 20px; height: 20px; }
.mods-list { flex: 1; }
.mod { height: 40px; display: flex; align-items: center; padding: 3px 0 0 49px; gap: 7px; font-size: 25px; color: #222; }
.mod-on { background: #d3d3d3; height: 42px; }
.mod-ic { width: 30px; height: 26px; margin-top: -2px; }
.wavy { text-decoration: underline wavy #8a9a8a 1px; text-underline-offset: 3px; }
.d-form { flex: 1; min-width: 0; overflow: hidden; }
.tabs { height: 64px; border-bottom: 3px solid #cecece; display: flex; align-items: stretch; font-size: 23.700px; color: #222; }
.tab { padding: 0 26.500px; display: flex; align-items: center; }
.tab-on { border-bottom: 6px solid #4083c9; padding-top: 3px; margin-bottom: -3px; }
.form { padding: 19px 0 0 9px; }
.grp + .grp { margin-top: 23px; }
.grp label { display: block; line-height: 32px; height: 32px; margin-bottom: 5px; font-size: 25.500px; color: #222; }
.fld { display: flex; align-items: center; gap: 13px; margin-left: 6px; }
.inp { width: 993px; height: 48px; background: #fff; border: 2.500px solid #c6c6c6; border-radius: 6px; display: flex; align-items: stretch; overflow: hidden; }
.val { flex: 1; padding-left: 12px; font-size: 25.800px; color: #222; line-height: 43px; }
.val em { color: #9a9a9a; }
.drop { width: 44px; flex: none; background: #fafafa; border-left: 2.500px solid #c6c6c6; display: flex; align-items: center; justify-content: center; }
.tri-f { width: 18px; height: 11px; fill: #6e6e6e; }
.pill { width: 9px; height: 39px; border: 2px solid #c8c8c8; border-radius: 5px; }
.d-foot { height: 96px; flex: none; border-top: 4px solid #d2d2d2; display: flex; align-items: center; justify-content: flex-end; gap: 25px; padding: 0 30px 0 0; }
.btn { width: 144px; height: 48px; font: 25px var(--ui); color: #111; background: #fff; border: 2.500px solid #c8c8c8; border-radius: 6px; padding: 0; }
.btn-off { background: #f2f2f2; color: #8e8e8e; border-color: #d4d4d4; }
.btn-ok { background: #5b88c3; color: #fff; border-color: #4a78b8; }
```
